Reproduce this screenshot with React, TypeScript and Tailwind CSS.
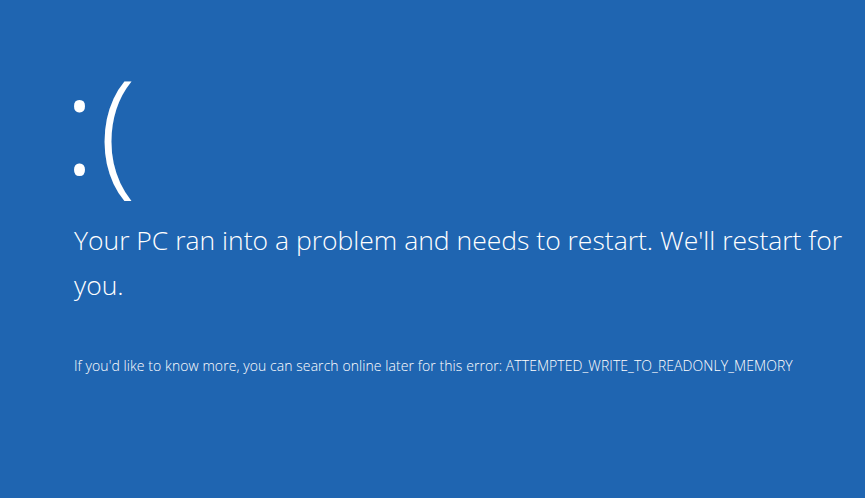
export default function App() {
  return (
    <div
      className="w-[865px] h-[498px] overflow-hidden bg-[#1f65b1] text-white pl-[70px]"
      style={{ fontFamily: '"Open Sans", "Noto Sans", sans-serif' }}
    >
      {/* sad face */}
      <div className="pt-[36px] h-[218px]">
        <div className="flex items-baseline font-light leading-[170px]">
          <span className="text-[138px] ml-[-7px]">:</span>
          <span className="text-[136px] ml-[3px] translate-y-[4px]">(</span>
        </div>
      </div>
      <p className="w-[800px] pl-[4px] text-[26.5px] leading-[45px] font-light">
        Your PC ran into a problem and needs to restart. We'll restart for you.
      </p>
      <p className="mt-[48px] pl-[4px] text-[14px] leading-[20px] font-light tracking-[0.07px]">
        If you'd like to know more, you can search online later for this error: ATTEMPTED_WRITE_TO_READONLY_MEMORY
      </p>
    </div>
  )
}
